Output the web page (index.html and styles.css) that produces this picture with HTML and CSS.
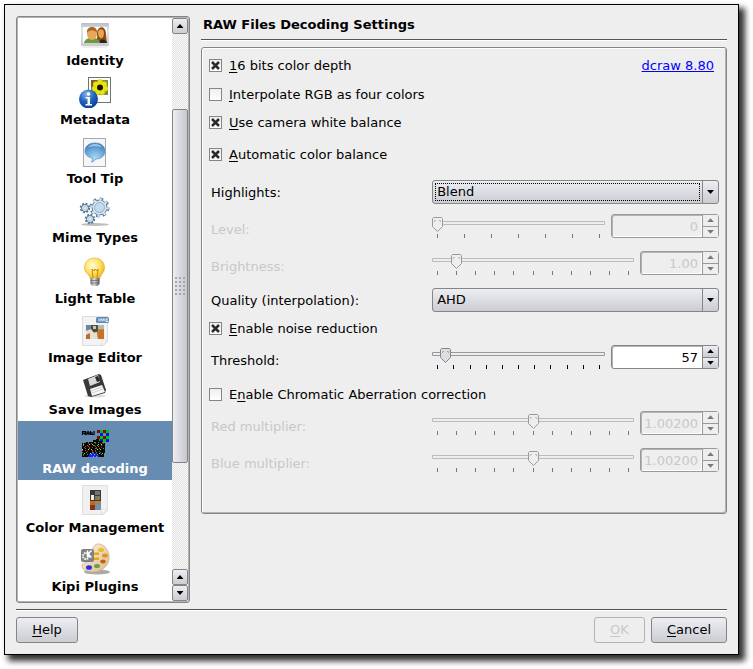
FILE: index.html
```html
<!DOCTYPE html>
<html lang="en">
<head>
<meta charset="utf-8">
<title>RAW Files Decoding Settings</title>
<link rel="stylesheet" href="styles.css">
</head>
<body>
<div class="window">
  <div class="body">
    <nav class="list">
      <div class="items">
        <a class="item first" href="#">
          <svg width="32" height="32" viewBox="0 0 32 32"><defs><linearGradient id="fr" x2="0" y2="1"><stop offset="0" stop-color="#b9bcc6"/><stop offset=".3" stop-color="#e4e5ea"/><stop offset="1" stop-color="#c8cad0"/></linearGradient></defs><path d="M4 30h24" stroke="#ddd" stroke-width="1"/><rect x="2" y="6" width="28" height="23" rx="1" fill="url(#fr)"/><rect x="4" y="10" width="24" height="16" fill="#fff"/><path d="M17 26c0-5 2-4 1-9 0-9 9-9 9 0l1 9z" fill="#8f4a12"/><path d="M19 16c0-5 6-5 6 0 0 6-5 8-6 0" fill="#e7a456"/><path d="M20 26c1-5 7-4 8 0z" fill="#272320"/><path d="M5 26c1-7 15-7 16 0z" fill="#6d9a40"/><ellipse cx="13" cy="17" rx="5" ry="6" fill="#e9a75b"/><path d="M8 16c-1-8 11-8 10 0-2-3-7-4-10 0" fill="#a7651f"/></svg>
          <span>Identity</span></a>
        <a class="item" href="#">
          <svg width="32" height="32" viewBox="0 0 32 32"><defs><radialGradient id="inf" cx=".4" cy=".25" r=".8"><stop offset="0" stop-color="#86b4ea"/><stop offset=".5" stop-color="#2264bd"/><stop offset="1" stop-color="#083a8e"/></radialGradient></defs><rect x="9.500" y="1.500" width="22" height="25" fill="#fdfdfd" stroke="#68786a"/><rect x="12" y="4" width="17" height="15" fill="#7d8b3b"/><path d="M12 4h7l-7 8z" fill="#81592a"/><g fill="#ece411" stroke="#b0a80c" stroke-width=".4"><circle cx="21" cy="6.500" r="3"/><circle cx="25" cy="8.500" r="3"/><circle cx="26" cy="12.500" r="3"/><circle cx="23" cy="16" r="3"/><circle cx="18.500" cy="16" r="3"/><circle cx="16" cy="12.500" r="3"/><circle cx="17" cy="8.500" r="3"/></g><circle cx="21" cy="11.500" r="5" fill="#ece411"/><circle cx="21" cy="11.500" r="3" fill="#15150a"/><circle cx="9.500" cy="23" r="9.500" fill="url(#inf)"/><circle cx="9.500" cy="18" r="1.800" fill="#fff"/><path d="M6.500 21h4.500v7h2v1.500H6.500V28h2v-5.500h-2z" fill="#fff"/></svg>
          <span>Metadata</span></a>
        <a class="item" href="#">
          <svg width="32" height="32" viewBox="0 0 32 32"><defs><radialGradient id="bub" cx=".5" cy=".8" r=".8"><stop offset="0" stop-color="#a9dbf4"/><stop offset=".6" stop-color="#69a5d8"/><stop offset="1" stop-color="#3e7cba"/></radialGradient></defs><rect x="4.500" y="3.500" width="22" height="28" fill="#f6f6f6" stroke="#a9a9a9"/><path d="M16 8c6 0 10 3 10 8s-4 8-9 8c-2 2-3 3-5 3 1-1 2-2 1-4-4-1-7-3-7-7 0-5 4-8 10-8z" fill="url(#bub)" stroke="#4d82b5" stroke-width=".6"/><path d="M9 12c3-4 11-4 14 0-4-1-10-1-14 0z" fill="#9cc6e8"/></svg>
          <span>Tool Tip</span></a>
        <a class="item" href="#">
          <svg width="32" height="32" viewBox="0 0 32 32"><ellipse cx="16" cy="30.500" rx="14" ry="1.500" fill="#bdbdbd"/><g fill="none" stroke="#587b99"><circle cx="20.500" cy="13.500" r="8" stroke-width="4" stroke-dasharray="3.140"/><circle cx="6" cy="14" r="4" stroke-width="2.500" stroke-dasharray="1.800 1.340"/><circle cx="11" cy="25" r="4" stroke-width="2.500" stroke-dasharray="1.800 1.340"/></g><circle cx="20.500" cy="13.500" r="7.500" fill="#d5e5ef" stroke="#557896"/><circle cx="20.500" cy="13.500" r="8" fill="none" stroke="#dce8f0" stroke-width="2.500" stroke-dasharray="2 4.280"/><circle cx="20.500" cy="13.500" r="5" fill="#c4dae8" stroke="#91afc6"/><circle cx="6" cy="14" r="3.500" fill="#e5eef4" stroke="#557896"/><circle cx="6" cy="14" r="1.500" fill="#fff" stroke="#86a3ba" stroke-width=".6"/><circle cx="11" cy="25" r="3.500" fill="#e5eef4" stroke="#557896"/><circle cx="11" cy="25" r="1.500" fill="#fff" stroke="#86a3ba" stroke-width=".6"/></svg>
          <span>Mime Types</span></a>
        <a class="item tall" href="#">
          <svg width="32" height="32" viewBox="0 0 32 32"><defs><radialGradient id="bulb" cx=".4" cy=".35" r=".7"><stop offset="0" stop-color="#fffce8"/><stop offset=".5" stop-color="#ffe369"/><stop offset="1" stop-color="#e9b114"/></radialGradient><linearGradient id="cap"><stop offset="0" stop-color="#777"/><stop offset=".4" stop-color="#ddd"/><stop offset="1" stop-color="#555"/></linearGradient></defs><path d="M15.500 3c6 0 10 4 10 10 0 5-4 6-5 11h-9c-1-5-6-6-6-11 0-6 4-10 10-10z" fill="url(#bulb)" stroke="#dfaa23" stroke-width=".6"/><path d="M14 23l-1-9 2 2 1-2 2 2 1-2-1 9" fill="none" stroke="#c58b0c"/><path d="M11.500 23h9v6l-2 2h-5l-2-2z" fill="url(#cap)"/><path d="M11.500 25.500h9M11.500 28h9" stroke="#666" stroke-width=".7"/></svg>
          <span>Light Table</span></a>
        <a class="item" href="#">
          <svg width="32" height="32" viewBox="0 0 32 32"><path d="M3.500 2.500h25v25l-4 4h-21z" fill="#f3f3f3" stroke="#ddd"/><path d="M28 27l-6 4 2-5z" fill="#fff" stroke="#ccc" stroke-width=".5"/><rect x="7" y="11" width="18" height="14" fill="#a9927c"/><path d="M7 11h5v5H7z" fill="#6788a2"/><path d="M12 11h7v7h-7z" fill="#465241"/><path d="M14 12h3v3h-3z" fill="#d9c0a5"/><path d="M7 17l5-2 3 4 3-1 1 7H7z" fill="#e8ded2"/><path d="M7 21l4-2v6H7z" fill="#b76b31"/><path d="M18 17l7-2v10h-6z" fill="#c97124"/><path d="M19 11h6v4h-6z" fill="#b6b9b0"/><rect x="17" y="3" width="13" height="6" rx="1.500" fill="#5d8cb8"/><path d="M20 4.500v3M22 7.500v-3l1.500 2 1.500-2v3M29 5h-2v2.500h2V6.500" fill="none" stroke="#fff" stroke-width=".9"/></svg>
          <span>Image Editor</span></a>
        <a class="item short" href="#">
          <svg width="32" height="25" viewBox="0 7 32 25"><ellipse cx="16" cy="30" rx="11" ry="1.500" fill="#ddd"/><path d="M4 14l16-6 2 1 5 15-1 3-14 4-3-1z" fill="#393939"/><path d="M9 13l10-4 2 7-10 4z" fill="#d9d9d9"/><path d="M16 11l3-1 2 5-3 1z" fill="#2a2a2a"/><path d="M11 23l12-4 3 7-13 4z" fill="#f7f7f7"/><path d="M12 25l11-4M13 27l11-4" stroke="#bbb" stroke-width=".7"/></svg>
          <span>Save Images</span></a>
        <a class="item selected" href="#" aria-current="page">
          <svg width="32" height="32" viewBox="0 0 32 32"><g fill="none" stroke="#000" stroke-width="1.200"><path d="M3.500 10V6.500h3v1.700h-3M5 8.200L6.800 10M8 10V7.500l1-1 1 1V10M8 8.500h2M11.500 6v3.500h1.500V7v2.500h2V6"/></g><g shape-rendering="crispEdges"><path d="M18 5h12v12H18z" fill="#00c200"/><path d="M18 5h3v3h-3zM24 5h3v3h-3zM18 11h3v3h-3zM24 11h3v3h-3z" fill="#720d14"/><path d="M21 8h3v3h-3zM27 8h3v3h-3zM21 14h3v3h-3zM27 14h3v3h-3z" fill="#0010ea"/><path d="M18 8h3v3h-3zM24 8h3v3h-3z" fill="#678cb2"/><path d="M3 18h4v-1h7v-2h3v-1h3v2h3v2h3v10h-1v4H3z" fill="#080808"/><g fill="none"><path d="M4 18.500h21M5 22.500h20M8 26.500h17M4 30.500h5" stroke="#d01818" stroke-dasharray="1 4 1 2 1 3"/><path d="M5 17.500h20M4 20.500h21M6 23.500h19M3 27.500h21M4 29.500h20" stroke="#18b428" stroke-dasharray="1 3 1 5 2 2"/><path d="M4 19.500h20M3 24.500h22M5 28.500h20" stroke="#e0c820" stroke-dasharray="1 5 1 2"/><path d="M6 21.500h19M3 25.500h20" stroke="#e84020" stroke-dasharray="1 2 1 6"/></g><path d="M10 29h2v-1h6v2h2v2H9v-1h1z" fill="#1822f0"/><path d="M12 29.500h6M14 31.500h4" stroke="#90a8f8" stroke-dasharray="1 2"/></g></svg>
          <span>RAW decoding</span></a>
        <a class="item" href="#">
          <svg width="32" height="32" viewBox="0 0 32 32"><path d="M3.500 1.500h25v25l-4 4h-21z" fill="#f1f1f1" stroke="#ddd"/><path d="M28 26l-6 4 2-5z" fill="#fff" stroke="#ccc" stroke-width=".5"/><rect x="11" y="6" width="11" height="20" fill="#333b3d"/><path d="M12 11h3v5h-3z" fill="#e9eceb"/><path d="M16 7h5v4h-5z" fill="#6d7775"/><path d="M16 12h5v4h-5z" fill="#8b7656"/><path d="M11 17h5v4h-5z" fill="#c36a19"/><path d="M16 17h6v4h-6z" fill="#a9825a"/><path d="M11 21h5v5h-5z" fill="#8d3216"/><path d="M16 21h6v5h-6z" fill="#6c93b6"/></svg>
          <span>Color Management</span></a>
        <a class="item" href="#">
          <svg width="32" height="32" viewBox="0 0 32 32"><defs><linearGradient id="pal" x2="1" y2="1"><stop offset="0" stop-color="#fdf6e8"/><stop offset="1" stop-color="#dcb988"/></linearGradient></defs><ellipse cx="18" cy="29" rx="13" ry="2.500" fill="#aaa"/><path d="M18 1c8-1 13 8 12 15-1 8-8 13-16 13-7 0-12-3-11-7 1-3 6-2 9-5 3-4-1-14 6-16z" fill="url(#pal)" stroke="#c9a87b" stroke-width=".7"/><ellipse cx="22" cy="7" rx="3" ry="2" fill="#e9c11e"/><ellipse cx="26" cy="12.500" rx="3" ry="2" fill="#e3922b"/><ellipse cx="24" cy="18.500" rx="2.700" ry="2" fill="#c35e18"/><ellipse cx="18" cy="23" rx="3" ry="2" fill="#6c9e42"/><ellipse cx="10" cy="24.500" rx="3" ry="2.300" fill="#2232e2"/><path d="M14 9.500h6v2.500h-6zM14 14.500h6V17h-6z" fill="#e8a90e"/><rect x="2" y="6" width="13" height="13" rx="2" fill="#7e8280"/><circle cx="7" cy="13" r="3" fill="none" stroke="#fff" stroke-width="2" stroke-dasharray="1.500 .860"/><path d="M8.500 7.500v7M12.500 7.500l-3.500 3.500 3.500 3.500" stroke="#fff" stroke-width="1.600" fill="none"/></svg>
          <span>Kipi Plugins</span></a>
      </div>
      <div class="scrollbar">
        <button class="step" aria-label="Scroll up"><i class="up"></i></button>
        <div class="track"><div class="before"></div><div class="thumb"><i class="grip"></i></div><div class="after"></div></div>
        <button class="step" aria-label="Page up"><i class="up"></i></button>
        <button class="step" aria-label="Scroll down"><i class="down"></i></button>
      </div>
    </nav>
    <main>
      <h1>RAW Files Decoding Settings</h1>
      <form class="group">
        <div class="row"><label class="check"><input type="checkbox" checked><span><u>1</u>6 bits color depth</span></label><a class="link" href="#">dcraw 8.80</a></div>
        <div class="row g5"><label class="check"><input type="checkbox"><span><u>I</u>nterpolate RGB as four colors</span></label></div>
        <div class="row g4"><label class="check"><input type="checkbox" checked><span><u>U</u>se camera white balance</span></label></div>
        <div class="row g8"><label class="check"><input type="checkbox" checked><span><u>A</u>utomatic color balance</span></label></div>
        <div class="row g14"><label class="name" for="hl">Highlights:</label><div class="combo focused"><select id="hl"><option>Blend</option></select></div></div>
        <div class="row g10 ranged off"><label class="name" for="lv">Level:</label>
          <div class="control"><div class="slider"><input type="range" aria-label="Level" min="0" max="100" value="0" disabled><div class="ticks"><i></i><i></i><i></i><i></i><i></i><i></i><i></i></div></div>
          <div class="spin wide"><input id="lv" type="text" value="0" disabled><div class="steps"><button type="button" aria-label="Increase" disabled><i class="up"></i></button><button type="button" aria-label="Decrease" disabled><i class="down"></i></button></div></div></div></div>
        <div class="row g13 ranged off"><label class="name" for="br">Brightness:</label>
          <div class="control"><div class="slider"><input type="range" aria-label="Brightness" min="0" max="100" value="10" disabled><div class="ticks"><i></i><i></i><i></i><i></i><i></i><i></i><i></i><i></i><i></i><i></i><i></i></div></div>
          <div class="spin"><input id="br" type="text" value="1.00" disabled><div class="steps"><button type="button" aria-label="Increase" disabled><i class="up"></i></button><button type="button" aria-label="Decrease" disabled><i class="down"></i></button></div></div></div></div>
        <div class="row g13"><label class="name" for="ql">Quality (interpolation):</label><div class="combo"><select id="ql"><option>AHD</option></select></div></div>
        <div class="row g4"><label class="check"><input type="checkbox" checked><span><u>E</u>nable noise reduction</span></label></div>
        <div class="row g5 ranged"><label class="name" for="th">Threshold:</label>
          <div class="control"><div class="slider"><input type="range" aria-label="Threshold" min="0" max="100" value="5"><div class="ticks"><i></i><i></i><i></i><i></i><i></i><i></i><i></i><i></i><i></i><i></i><i></i></div></div>
          <div class="spin wide"><input id="th" type="text" value="57"><div class="steps"><button type="button" aria-label="Increase"><i class="up"></i></button><button type="button" aria-label="Decrease"><i class="down"></i></button></div></div></div></div>
        <div class="row g13"><label class="check"><input type="checkbox"><span>E<u>n</u>able Chromatic Aberration correction</span></label></div>
        <div class="row g5 ranged off"><label class="name" for="rm">Red multiplier:</label>
          <div class="control"><div class="slider"><input type="range" aria-label="Red multiplier" min="0" max="100" value="50" disabled><div class="ticks"><i></i><i></i><i></i><i></i><i></i><i></i><i></i><i></i><i></i><i></i><i></i></div></div>
          <div class="spin"><input id="rm" type="text" value="1.00200" disabled><div class="steps"><button type="button" aria-label="Increase" disabled><i class="up"></i></button><button type="button" aria-label="Decrease" disabled><i class="down"></i></button></div></div></div></div>
        <div class="row g13 ranged off"><label class="name" for="bm">Blue multiplier:</label>
          <div class="control"><div class="slider"><input type="range" aria-label="Blue multiplier" min="0" max="100" value="50" disabled><div class="ticks"><i></i><i></i><i></i><i></i><i></i><i></i><i></i><i></i><i></i><i></i><i></i></div></div>
          <div class="spin"><input id="bm" type="text" value="1.00200" disabled><div class="steps"><button type="button" aria-label="Increase" disabled><i class="up"></i></button><button type="button" aria-label="Decrease" disabled><i class="down"></i></button></div></div></div></div>
      </form>
    </main>
  </div>
  <footer>
    <button class="push help"><u>H</u>elp</button>
    <button class="push ok" disabled><u>O</u>K</button>
    <button class="push cancel"><u>C</u>ancel</button>
  </footer>
</div>
</body>
</html>
```
FILE: styles.css
```css
* { box-sizing: border-box; }
body {
  margin: 0;
  padding: 4px 14px 14px 4px;
  min-height: 100vh;
  display: flex;
  background: #fff;
  color: #000;
  font: 13px/16px "DejaVu Sans", sans-serif;
}
input, select, button { font: inherit; color: inherit; margin: 0; }
u { text-underline-offset: 2px; text-decoration-skip-ink: none; }

.window {
  flex: 1;
  min-width: 0;
  display: flex;
  flex-direction: column;
  padding: 11px;
  background: #eee;
  border: 1px solid #000;
  box-shadow: 5px 5px 6px 1px rgba(0, 0, 0, .8);
}
.body { flex: 1; display: flex; gap: 11px; }

/* Page list */
.list {
  width: 174px;
  display: flex;
  padding: 1px;
  background: #fff;
  border: 1px solid #858585;
  border-radius: 3px;
  box-shadow: inset 0 0 0 1px #b4b4b4;
}
.items { flex: 1; min-width: 0; }
.item {
  display: flex;
  flex-direction: column;
  align-items: center;
  justify-content: flex-end;
  gap: 4px;
  height: 59px;
  padding-bottom: 3px;
  color: #000;
  font-weight: bold;
  text-decoration: none;
  white-space: nowrap;
}
.item svg { flex: none; }
.item.first { height: 54px; }
.item.tall { height: 61px; }
.item.short { height: 52px; }
.item.selected { background: #678cb2; color: #fff; }

.scrollbar { width: 16px; display: flex; flex-direction: column; }
.step {
  height: 16px;
  padding: 0;
  display: flex;
  align-items: center;
  justify-content: center;
  background: linear-gradient(#eceef2, #cccdd3);
  border: 1px solid #858585;
  border-radius: 2px;
}
.track {
  flex: 1;
  display: flex;
  flex-direction: column;
  background: repeating-conic-gradient(#e2e2e2 0 25%, #fafafa 0 50%) 0 0 / 2px 2px;
}
.before { flex: 75; }
.thumb {
  flex: 354;
  display: flex;
  align-items: center;
  justify-content: center;
  background: linear-gradient(90deg, #eceef2, #c6c7ce);
  border: 1px solid #858585;
  border-radius: 2px;
}
.after { flex: 106; }
.grip {
  width: 11px;
  height: 19px;
  background: conic-gradient(from 270deg at 2px 2px, #a5a6ac 25%, transparent 0) 0 0 / 4px 4px;
}

.up, .down {
  width: 7px;
  height: 4px;
  background: currentColor;
}
.up { clip-path: polygon(50% 0, 100% 100%, 0 100%); }
.down { clip-path: polygon(0 0, 100% 0, 50% 100%); }

/* Settings page */
main { flex: 1; min-width: 0; }
h1 {
  margin: 0 0 7px;
  padding: 1px 2px 6px;
  font-size: 13px;
  line-height: 16px;
  border-bottom: 1px solid #555;
  box-shadow: 0 1px #fff;
}
.group {
  padding: 5px 7px 41px;
  border: 1px solid #858585;
  border-radius: 3px;
  box-shadow: inset 1px 1px #fff, inset -1px -1px #b4b4b4;
}
.row {
  height: 24px;
  display: grid;
  grid-template-columns: 7fr 9fr;
  align-items: center;
}
.g4 { margin-top: 4px; }
.g5 { margin-top: 5px; }
.g8 { margin-top: 8px; }
.g10 { margin-top: 10px; }
.g13 { margin-top: 13px; }
.g14 { margin-top: 14px; }

.check { display: flex; align-items: center; gap: 7px; white-space: nowrap; }
.check span { padding-top: 2px; }
.check input {
  appearance: none;
  width: 13px;
  height: 13px;
  border: 1px solid #858585;
  background: linear-gradient(#eee, #fff);
}
.check input:checked {
  background:
    url("data:image/svg+xml,%3Csvg xmlns='http://www.w3.org/2000/svg' width='9' height='9'%3E%3Cpath d='M1 1l7 7M8 1L1 8' stroke='%232b2b2b' stroke-width='2.500'/%3E%3C/svg%3E") center no-repeat,
    linear-gradient(#eee, #fff);
}
.link { justify-self: end; margin: 2px 5px 0 0; color: #00f; text-decoration-skip-ink: none; }
.name { padding-top: 1px; padding-left: 2px; }
.ranged .name { padding-top: 7px; }
.off { color: #c8c8c8; }

.combo { position: relative; }
.combo select {
  appearance: none;
  display: block;
  width: 100%;
  height: 24px;
  padding: 0 20px 0 4px;
  border: 1px solid #858585;
  border-radius: 3px;
  background:
    url("data:image/svg+xml,%3Csvg xmlns='http://www.w3.org/2000/svg' width='7' height='4'%3E%3Cpath d='M0 0h7L3.5 4z'/%3E%3C/svg%3E") right 4px center no-repeat,
    linear-gradient(#858585, #858585) right 15px top / 1px 100% no-repeat,
    linear-gradient(#eceef2, #cccdd3);
}
.focused::after {
  content: "";
  position: absolute;
  inset: 3px 19px 3px 3px;
  border: 1px dotted #000;
  pointer-events: none;
}

.control { height: 24px; display: flex; gap: 6px; }
.slider { flex: 1; min-width: 0; display: flex; flex-direction: column; padding-top: 1px; }
.slider input {
  appearance: none;
  display: block;
  width: 100%;
  height: 16px;
  background: none;
}
.slider input::-webkit-slider-runnable-track {
  height: 4px;
  border-radius: 1px;
  background: #eee;
  box-shadow: inset 0 0 0 1px #999;
}
.slider input::-webkit-slider-thumb {
  appearance: none;
  width: 11px;
  height: 15px;
  margin-top: -4px;
  background: url("data:image/svg+xml,%3Csvg xmlns='http://www.w3.org/2000/svg' width='11' height='15'%3E%3Cpath d='M1.500.5h8l1 1v8l-5 5-5-5v-8z' fill='%23dcdee4' stroke='%23858585'/%3E%3Cpath d='M2.500 5V3.500H4M7 3.500h1.500V5' fill='none' stroke='%23aaa'/%3E%3C/svg%3E") no-repeat;
}
.off .slider input::-webkit-slider-runnable-track { box-shadow: inset 0 0 0 1px #bbb; }
.off .slider input::-webkit-slider-thumb {
  background-image: url("data:image/svg+xml,%3Csvg xmlns='http://www.w3.org/2000/svg' width='11' height='15'%3E%3Cpath d='M1.500.5h8l1 1v8l-5 5-5-5v-8z' fill='%23eee' stroke='%23999'/%3E%3Cpath d='M2.500 5V3.500H4M7 3.500h1.500V5' fill='none' stroke='%23bbb'/%3E%3C/svg%3E");
}
.ticks { display: flex; justify-content: space-between; margin-top: 3px; padding: 0 5px; }
.ticks i { width: 1px; height: 4px; background: #000; }
.off .ticks i { background: #777; }

.spin {
  width: 79px;
  height: 24px;
  display: flex;
  border: 1px solid #858585;
  border-radius: 3px;
  background: #fff;
  box-shadow: inset 1px 1px #b4b4b4;
}
.spin.wide { width: 108px; }
.spin input {
  flex: 1;
  min-width: 0;
  padding: 1px 4px 0 0;
  border: 0;
  background: none;
  text-align: right;
}
.steps { width: 16px; display: flex; flex-direction: column; border-left: 1px solid #858585; }
.steps button {
  flex: 1;
  padding: 0;
  display: flex;
  align-items: center;
  justify-content: center;
  border: 0;
  background: linear-gradient(#eceef2, #cccdd3);
}
.steps button + button { border-top: 1px solid #858585; }
.off .spin { background: #eee; border-color: #999; box-shadow: inset 1px 1px #b4b4b4, inset -17px -1px #fff; }
.off .spin input { color: #c8c8c8; }
.off .steps { border-color: #999; }
.off .steps button { background: #eee; color: #777; border-color: #999; }

/* Dialog buttons */
footer {
  display: flex;
  gap: 6px;
  margin-top: 6px;
  padding-top: 7px;
  border-top: 1px solid #555;
  box-shadow: inset 0 1px #fff;
}
.push {
  height: 26px;
  padding: 0;
  border: 1px solid #858585;
  border-radius: 3px;
  background: linear-gradient(#eceef2, #cccdd3);
}
.push:disabled { background: #eee; border-color: #b4b4b4; color: #c8c8c8; }
.help { width: 62px; margin-right: auto; }
.ok { width: 51px; }
.cancel { width: 76px; }
```
